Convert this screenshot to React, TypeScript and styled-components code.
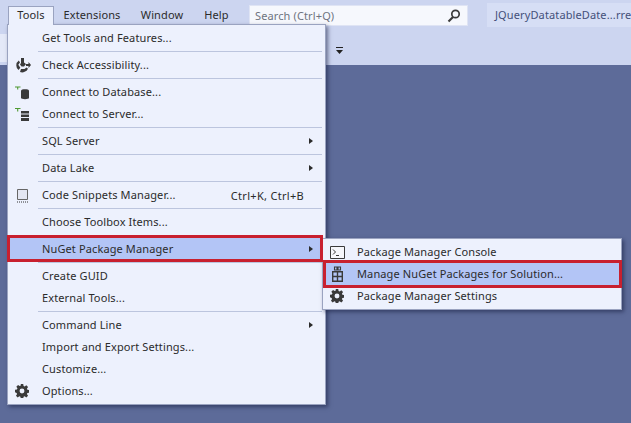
import React from "react";
import styled, { createGlobalStyle } from "styled-components";

const Global = createGlobalStyle`
  html, body { margin: 0; padding: 0; width: 631px; height: 423px; overflow: hidden; background: #5d6b99; }
  #root { width: 631px; height: 423px; }
  * { box-sizing: border-box; }
`;
const Page = styled.div`
  position: relative; width: 631px; height: 423px; overflow: hidden;
  background: #5d6b99; color: #2b2b2b;
  font-family: "Noto Sans", "Open Sans", sans-serif; font-size: 11px; letter-spacing: .12px;
`;
const Chrome = styled.div`
  height: 65px; background: #ccd5f0;
  display: flex; flex-direction: column;
`;
const MenuBar = styled.div`
  height: 33px; padding: 6px 0 0 8px; display: flex; align-items: flex-start;
`;
const TopItem = styled.div<{ $open?: boolean; $w: number }>`
  width: ${p => p.$w}px; height: ${p => (p.$open ? 19 : 18)}px; flex: none;
  text-align: center; line-height: 17px; position: relative; z-index: 3;
  ${p => p.$open ? "background:#edf1fd;border:1px solid #9aa3c0;border-bottom:none;line-height:15px;" : ""}
`;
const Search = styled.div`
  margin: -1px 0 0 10px; width: 219px; height: 21px; background: #f6f8fd; flex: none;
  border: 1px solid #dfe4f4; display: flex; align-items: center; justify-content: space-between;
  padding: 0 6px 0 5px; color: #6f7480;
`;
const Solution = styled.div`
  margin: -3px 0 0 19px; height: 24px; flex: 1; background: #d6def5; color: #44507a;
  padding-left: 8px; line-height: 23px; white-space: nowrap; overflow: hidden;
`;
const ToolRow = styled.div`
  flex: 1; display: flex; align-items: center;
`;
const ToolStart = styled.div`
  width: 8px; height: 28px; margin-bottom: 2px; background: #e4e9f8;
`;
const ToolIcons = styled.div`
  padding: 3px 0 0 328px; display: flex; align-items: center;
`;
const Menu = styled.div<{ $x: number; $y: number; $w: number }>`
  position: absolute; left: ${p => p.$x}px; top: ${p => p.$y}px; width: ${p => p.$w}px;
  background: #edf1fd; border: 1px solid #9aa3c0; padding: 2px;
  box-shadow: 2px 2px 4px rgba(20, 28, 60, .55); z-index: 2;
`;
const Row = styled.div<{ $active?: boolean }>`
  height: 22px; display: flex; align-items: center; position: relative;
  background: ${p => (p.$active ? "#b3c5f6" : "transparent")};
`;
const IconCell = styled.div<{ $w: number }>`
  width: ${p => p.$w}px; flex: none; display: flex; align-items: center; padding-left: 5px;
`;
const Label = styled.div`flex: 1; white-space: nowrap; line-height: 22px; `;
const Shortcut = styled.div`margin-right: 19px; white-space: nowrap; letter-spacing: .3px;`;
const Arrow = styled.div`
  position: absolute; right: 10px; top: 8px; width: 0; height: 0;
  border-left: 4px solid #2b2b2b; border-top: 3.5px solid transparent; border-bottom: 3.5px solid transparent;
`;
const Sep = styled.div`
  height: 5px; margin-left: 28px; position: relative;
  &::after { content: ""; position: absolute; left: 0; right: 1px; top: 2px; height: 1px; background: #bcc5de; }
`;
const Highlight = styled.div<{ $x: number; $y: number; $w: number; $h: number }>`
  position: absolute; left: ${p => p.$x}px; top: ${p => p.$y}px; width: ${p => p.$w}px; height: ${p => p.$h}px;
  border: 3px solid #c8202f; z-index: 5; pointer-events: none;
`;

const Gear = () => (
  <svg width="14" height="14" viewBox="0 0 16 16" fill="#3a3a3a">
    <path fillRule="evenodd" d="M6.600 0h2.800l.4 2.200 1.300.6 1.800-1.300 2 2-1.300 1.800.6 1.300 2.200.4v2.800l-2.200.4-.6 1.300 1.300 1.800-2 2-1.800-1.300-1.300.6-.4 2.200H6.600l-.4-2.200-1.300-.6-1.800 1.300-2-2 1.300-1.800-.6-1.300L0 9.400V6.600l2.200-.4.6-1.300L1.500 3.100l2-2 1.800 1.300 1.300-.6zM8 5.200a2.800 2.800 0 1 0 0 5.600 2.800 2.800 0 0 0 0-5.600z"/>
  </svg>
);
const Access = () => (
  <svg width="16" height="15" viewBox="0 0 16 15" fill="#3a3a3a">
    <path d="M6 0h3v4.500L11 6 9 8.500H6.500L5 6.500l1-1.500z"/>
    <path d="M3.800 2.500 5 4.500 3.300 6.800l2 3L3.500 12A6 6 0 0 1 3.800 2.500z"/>
    <path d="M6 11h3.500l2-1.500 1.500 1.200A6.500 6.500 0 0 1 5 14z"/>
    <path d="M11 6h2.500V4l2.500 3-2.500 3V8H11z"/>
  </svg>
);
const Database = () => (
  <svg width="15" height="16" viewBox="0 0 15 16">
    <path d="M1 1v.1M4 1v.1M0 3h5.500M2.700 3.500v2" stroke="#4f9a32" strokeWidth="1.100" fill="none"/>
    <path d="M6 6.500C6 4.700 14 4.700 14 6.500V14c0 1.500-8 1.500-8 0z" fill="#3a3a3a"/>
  </svg>
);
const Server = () => (
  <svg width="15" height="16" viewBox="0 0 15 16">
    <path d="M1 .5v.1M4 .5v.1M0 2.500h5.500M2.700 3v2.500" stroke="#4f9a32" strokeWidth="1.100" fill="none"/>
    <path d="M6 5h8v2.500H6zM6 8.500h8V11H6zM6 12h8v3H6z" fill="#3a3a3a"/>
  </svg>
);
const Snippet = () => (
  <svg width="14" height="15" viewBox="0 0 14 15">
    <path d="M2.500 1.500h10v10h-10z" fill="#e3e6f2" stroke="#666" strokeWidth="1"/>
    <path d="M2 14h11" stroke="#333" strokeDasharray="1 1"/>
  </svg>
);
const Console = () => (
  <svg width="15" height="13" viewBox="0 0 15 13">
    <path d="M.5.500h14v12H.5z" fill="#f6f7fb" stroke="#3a3a3a"/>
    <path d="M3 3.500 5.500 6 3 8.500M6 9.500h3" fill="none" stroke="#3a3a3a"/>
  </svg>
);
const Gift = () => (
  <svg width="14" height="16" viewBox="0 0 14 16" fill="none" stroke="#3a3a3a" strokeWidth="1.400">
    <path d="M2.700 5.700h9.600v9.600H2.700zM7.500 5v11M2.700 10.500h9.600"/>
    <path d="M4.500 1h2.500v3H4.500zM8 1h2.500v3H8z" strokeWidth="1.100"/>
  </svg>
);
const SearchIcon = () => (
  <svg width="14" height="14" viewBox="0 0 14 14" fill="none" stroke="#3b3b3b">
    <circle cx="8.500" cy="5" r="3.700" strokeWidth="1.700"/>
    <path d="M6 8 1.500 12.500" strokeWidth="2.200"/>
  </svg>
);
const Overflow = () => (
  <svg width="7" height="7" viewBox="0 0 7 7" fill="#222">
    <path d="M0 0h7v1H0zM0 3h7L3.500 7z"/>
  </svg>
);

type Item = { t: string; i?: React.ReactNode; s?: string; a?: boolean; active?: boolean } | "sep";
const items: Item[] = [
  { t: "Get Tools and Features..." }, "sep",
  { t: "Check Accessibility...", i: <Access /> }, "sep",
  { t: "Connect to Database...", i: <Database /> },
  { t: "Connect to Server...", i: <Server /> }, "sep",
  { t: "SQL Server", a: true }, "sep",
  { t: "Data Lake", a: true }, "sep",
  { t: "Code Snippets Manager...", i: <Snippet />, s: "Ctrl+K, Ctrl+B" }, "sep",
  { t: "Choose Toolbox Items..." }, "sep",
  { t: "NuGet Package Manager", a: true, active: true }, "sep",
  { t: "Create GUID" },
  { t: "External Tools..." }, "sep",
  { t: "Command Line", a: true },
  { t: "Import and Export Settings..." },
  { t: "Customize..." },
  { t: "Options...", i: <Gear /> },
];
const sub: Item[] = [
  { t: "Package Manager Console", i: <Console /> },
  { t: "Manage NuGet Packages for Solution...", i: <Gift />, active: true },
  { t: "Package Manager Settings", i: <Gear /> },
];
const renderItems = (list: Item[], w: number) =>
  list.map((it, n) =>
    it === "sep" ? <Sep key={n} /> : (
      <Row key={n} $active={it.active}>
        <IconCell $w={w}>{it.i}</IconCell>
        <Label>{it.t}</Label>
        {it.s && <Shortcut>{it.s}</Shortcut>}
        {it.a && <Arrow />}
      </Row>
    ));

export default function App() {
  return (
    <Page>
      <Global />
      <Chrome>
        <MenuBar>
          <TopItem $open $w={46}>Tools</TopItem>
          <TopItem $w={76}>Extensions</TopItem>
          <TopItem $w={64}>Window</TopItem>
          <TopItem $w={45}>Help</TopItem>
          <Search><span>Search (Ctrl+Q)</span><SearchIcon /></Search>
          <Solution>JQueryDatatableDate...rre</Solution>
        </MenuBar>
        <ToolRow>
          <ToolStart />
          <ToolIcons><Overflow /></ToolIcons>
        </ToolRow>
      </Chrome>
      <Menu $x={7} $y={24} $w={319}>{renderItems(items, 32)}</Menu>
      <Menu $x={322} $y={238} $w={300}>{renderItems(sub, 32)}</Menu>
      <Highlight $x={7} $y={235} $w={316} $h={27} />
      <Highlight $x={323} $y={260} $w={299} $h={28} />
    </Page>
  );
}
